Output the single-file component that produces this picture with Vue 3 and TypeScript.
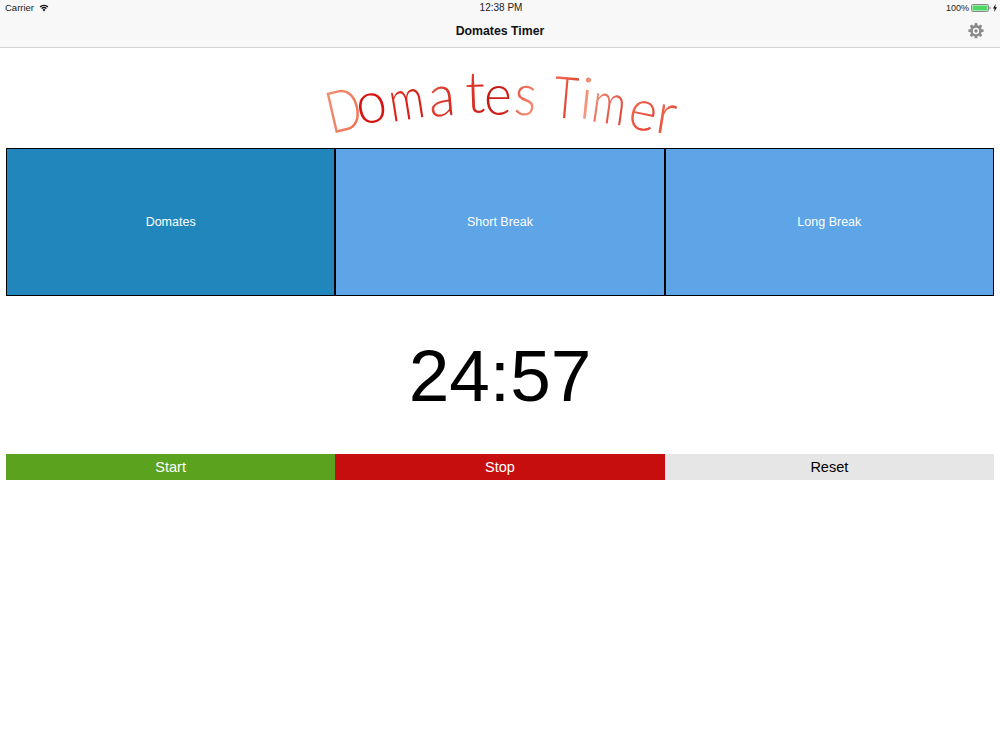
<template>
  <div class="page">
    <header class="top-bar">
      <div class="status-bar">
        <div class="status-left">
          <span>Carrier</span>
          <svg class="wifi" width="10" height="8" viewBox="0 0 11 8">
            <path d="M5.5 7.8 3.9 5.9a2.4 2.4 0 0 1 3.2 0Z" fill="#111" />
            <path d="M3.3 5.2 2.4 4.1a4.7 4.7 0 0 1 6.2 0L7.7 5.2a3.3 3.3 0 0 0-4.4 0Z" fill="#111" />
            <path d="M1.8 3.4.7 2.2a7.1 7.1 0 0 1 9.6 0L9.2 3.4a5.6 5.6 0 0 0-7.4 0Z" fill="#111" />
          </svg>
        </div>
        <span class="clock">12:38 PM</span>
        <div class="status-right">
          <span class="percent">100%</span>
          <svg class="battery" width="20" height="8" viewBox="0 0 20 8">
            <rect x="0.5" y="0.5" width="17" height="7" rx="1.6" fill="none" stroke="#888" />
            <rect x="1.5" y="1.5" width="15" height="5" rx="0.6" fill="#4cd964" />
            <path d="M18.5 2.6c.8.2 1.1.7 1.1 1.4s-.3 1.2-1.1 1.4Z" fill="#888" />
          </svg>
          <svg class="bolt" width="4" height="8" viewBox="0 0 4 8">
            <path d="M2.6 0 0 4.6h1.6L1.2 8 4 3.2H2.3Z" fill="#111" />
          </svg>
        </div>
      </div>
      <nav class="nav-bar">
        <span class="nav-title">Domates Timer</span>
        <svg class="gear" width="16" height="16" viewBox="0 0 24 24">
          <path
            fill="#8a8a8a"
            fill-rule="evenodd"
            d="M10.2 0h3.6l.5 3.2 1.9.8 2.6-1.9 2.6 2.6-1.9 2.6.8 1.9 3.2.5v3.6l-3.2.5-.8 1.9 1.9 2.6-2.6 2.6-2.6-1.9-1.9.8-.5 3.2h-3.6l-.5-3.2-1.9-.8-2.6 1.9-2.6-2.6 1.9-2.6-.8-1.9-3.2-.5v-3.6l3.2-.5.8-1.9-1.9-2.6 2.6-2.6 2.6 1.9 1.9-.8ZM12 7.2a4.8 4.8 0 1 0 0 9.6 4.8 4.8 0 0 0 0-9.6Z"
          />
          <circle cx="12" cy="12" r="2.6" fill="#8a8a8a" />
        </svg>
      </nav>
    </header>

    <div class="logo">
      <svg width="1000" height="100" viewBox="0 48 1000 100">
        <defs>
          <linearGradient
            v-for="(l, i) in logoLetters"
            :id="`ink${i}`"
            :key="i"
            x1="0"
            y1="0"
            x2="1"
            y2="1"
          >
            <stop offset="0" :stop-color="l.from" />
            <stop offset="1" :stop-color="l.to" />
          </linearGradient>
        </defs>
        <text
          v-for="(l, i) in logoLetters"
          :key="i"
          class="logo-text"
          :fill="`url(#ink${i})`"
          :transform="`translate(${l.x} ${l.y}) rotate(${l.r}) scale(${l.sx} 1)`"
        >{{ l.ch }}</text>
      </svg>
    </div>

    <section class="modes">
      <button v-for="mode in modes" :key="mode" class="mode" :class="{ active: mode === current }">
        {{ mode }}
      </button>
    </section>

    <div class="timer">24:57</div>

    <section class="actions">
      <button v-for="action in actions" :key="action.label" class="action" :class="action.kind">
        {{ action.label }}
      </button>
    </section>
  </div>
</template>

<script setup lang="ts">
const current = 'Domates'
const modes = ['Domates', 'Short Break', 'Long Break']

const actions = [
  { label: 'Start', kind: 'start' },
  { label: 'Stop', kind: 'stop' },
  { label: 'Reset', kind: 'reset' },
]

// hand-placed along the arc of the title
const logoLetters = [
  { ch: 'D', x: 331, y: 134, r: -13, sx: 0.8, from: '#f4977b', to: '#ee6a4c' },
  { ch: 'o', x: 359, y: 125, r: -10, sx: 0.95, from: '#d51512', to: '#d51512' },
  { ch: 'm', x: 392, y: 122, r: -9, sx: 0.75, from: '#e0301f', to: '#d51512' },
  { ch: 'a', x: 430, y: 117, r: -5, sx: 0.95, from: '#ec6a50', to: '#cf1512' },
  { ch: 't', x: 466, y: 113, r: -2, sx: 1, from: '#e9513c', to: '#c91210' },
  { ch: 'e', x: 484, y: 115, r: 0, sx: 0.92, from: '#b70c0c', to: '#de2c20' },
  { ch: 's', x: 513, y: 114, r: 5, sx: 0.9, from: '#e5402e', to: '#f8a084' },
  { ch: 'T', x: 552, y: 117, r: 5, sx: 0.72, from: '#f17a5c', to: '#d9241b' },
  { ch: 'i', x: 578, y: 118, r: 6, sx: 1, from: '#ef7558', to: '#f8b097' },
  { ch: 'm', x: 590, y: 121, r: 8, sx: 0.72, from: '#f7a98e', to: '#d92a1e' },
  { ch: 'e', x: 626, y: 127, r: 12, sx: 0.92, from: '#f07a5c', to: '#e5352a' },
  { ch: 'r', x: 654, y: 132, r: 9, sx: 0.95, from: '#f07a5c', to: '#e23a2a' },
]
</script>

<style scoped>
.page {
  width: 1000px;
  height: 750px;
  background: #fff;
  font-family: "Liberation Sans", Arial, sans-serif;
  color: #000;
  overflow: hidden;
}

.top-bar {
  background: #f8f8f8;
  border-bottom: 1px solid #d4d4d4;
}

.status-bar {
  height: 15px;
  padding: 0 3px 0 5px;
  display: grid;
  grid-template-columns: 1fr auto 1fr;
  align-items: center;
  font-size: 9.5px;
  color: #222;
}

.status-left {
  display: flex;
  align-items: center;
  gap: 5px;
}

.clock {
  font-size: 10px;
}

.status-right {
  display: flex;
  align-items: center;
  justify-content: flex-end;
  gap: 2px;
}

.percent {
  font-size: 9px;
}

.nav-bar {
  height: 32px;
  box-sizing: border-box;
  display: flex;
  align-items: center;
  justify-content: flex-end;
  padding: 0 16px 0 0;
  position: relative;
}

.nav-title {
  position: absolute;
  left: 0;
  right: 0;
  text-align: center;
  font-size: 12.3px;
  font-weight: 700;
  color: #111;
}

.gear {
  display: block;
}

.logo {
  height: 100px;
}

.logo svg {
  display: block;
}

.logo-text {
  font-family: Lato, sans-serif;
  font-size: 58px;
  font-weight: 300;
}

.modes {
  margin: 0 6px;
  display: grid;
  grid-template-columns: repeat(3, 1fr);
  height: 148px;
}

.mode {
  border: 1px solid #000;
  background: #5da5e6;
  color: #fff;
  font: inherit;
  font-size: 12.5px;
  padding: 0;
}

.mode.active {
  background: #2086bb;
}

.timer {
  height: 158px;
  display: flex;
  align-items: center;
  justify-content: center;
  font-size: 73px;
}

.actions {
  margin: 0 6px;
  display: grid;
  grid-template-columns: repeat(3, 1fr);
  height: 26px;
}

.action {
  border: 0;
  padding: 0;
  font: inherit;
  font-size: 14.5px;
}

.start {
  background: #5ba21e;
  color: #fff;
}

.stop {
  background: #c70e0e;
  color: #fff;
}

.reset {
  background: #e6e6e6;
  color: #000;
}
</style>

<style>
html,
body {
  margin: 0;
  background: #fff;
}
</style>
